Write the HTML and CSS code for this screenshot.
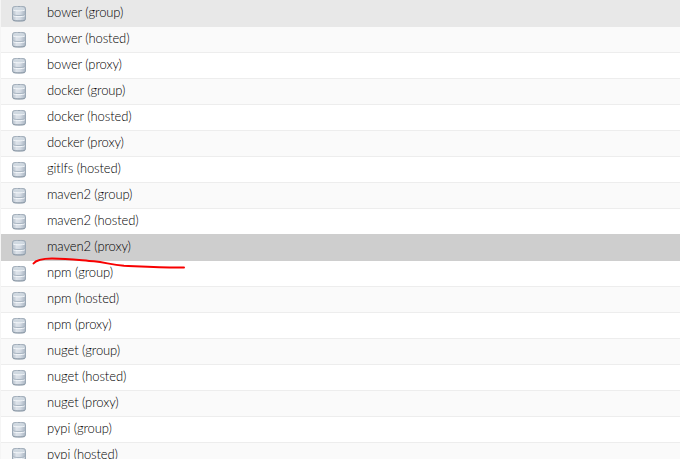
FILE: index.html
```html
<!DOCTYPE html>
<html lang="en">
<head>
  <meta charset="UTF-8" />
  <meta name="viewport" content="width=device-width, initial-scale=1" />
  <title>Recipes</title>
  <link rel="stylesheet" href="styles.css">
</head>
<body>
  <svg class="defs" aria-hidden="true">
    <defs>
      <linearGradient id="metal" x1="0" x2="1" y1="0" y2="0">
        <stop offset="0" stop-color="#b4bec9" />
        <stop offset="0.3" stop-color="#dde3ea" />
        <stop offset="0.6" stop-color="#d3dae3" />
        <stop offset="1" stop-color="#a9b5c2" />
      </linearGradient>
      <symbol id="db" viewBox="0 0 16 17">
        <path d="M1.5 3.5C1.5 1.2 4 1.5 8 1.5S14.5 1.2 14.5 3.5V14C14.5 16.2 12 16 8 16S1.5 16.2 1.5 14Z" fill="url(#metal)" stroke="#9ba8b5" />
        <ellipse cx="8" cy="3.6" rx="5.5" ry="1.5" fill="#d0d9e1" />
        <path d="M2 4.8C3.5 6.2 12.500 6.2 14 4.8M2 10.6C3.5 12 12.5 12 14 10.6" fill="none" stroke="#f5f8fb" />
        <path d="M1.5 9.4C3.5 10.9 12.5 10.9 14.5 9.4" fill="none" stroke="#a5b1bd" stroke-width=".9" />
        <path d="M2 15C4 16.2 12 16.2 14 15" fill="none" stroke="#909daa" />
      </symbol>
    </defs>
  </svg>

  <div class="grid" id="grid"></div>

  <!-- Pen mark under the selected row -->
  <svg class="pen-mark" width="160" height="16" viewBox="0 0 160 16" aria-hidden="true">
    <path d="M3.5 8.5C6 5 13 3.6 22 3.5C39 3.5 52 5.5 64 6.3C76 7.5 81 9.8 94 10.7C112 11.5 132 12.8 154 12.5" />
  </svg>

  <script>
    const recipes = [
      'bower (group)', 'bower (hosted)', 'bower (proxy)',
      'docker (group)', 'docker (hosted)', 'docker (proxy)',
      'gitlfs (hosted)',
      'maven2 (group)', 'maven2 (hosted)', 'maven2 (proxy)',
      'npm (group)', 'npm (hosted)', 'npm (proxy)',
      'nuget (group)', 'nuget (hosted)', 'nuget (proxy)',
      'pypi (group)', 'pypi (hosted)'
    ];

    document.getElementById('grid').innerHTML = recipes.map((name) => {
      let state = '';
      if (name === 'bower (group)') state = ' hover';
      if (name === 'maven2 (proxy)') state = ' selected';
      return `<div class="row${state}"><svg class="icon"><use href="#db" /></svg><span class="name">${name}</span></div>`;
    }).join('');
  </script>
</body>
</html>
```

FILE: styles.css
```css
body {
  margin: 0;
  height: 459px;
  overflow: hidden;
  background: #fff;
  font-family: Lato, "Liberation Sans", sans-serif;
}
.defs {
  position: absolute;
  width: 0;
  height: 0;
}
.grid {
  padding-top: 1px;
  border-left: 1px solid #f5f5f5;
}
.row {
  display: flex;
  align-items: flex-start;
  height: 26px;
  box-sizing: border-box;
  border-bottom: 1px solid #ededed;
  background: #fff;
}
.row:nth-child(even) {
  background: #fafafa;
}
.row.hover {
  background: #e8e8e8;
  border-color: #e8e8e8;
  box-shadow: 0 -1px #e8e8e8;
}
.row.selected {
  background: #cecece;
  border-color: #cecece;
  box-shadow: 0 -1px #cecece;
}
.icon {
  flex: none;
  width: 16px;
  height: 17px;
  margin: 4px 20px 0 10px;
}
.name {
  font-size: 13px;
  font-weight: 300;
  line-height: 15px;
  letter-spacing: -0.1px;
  margin-top: 4px;
  color: #000;
  white-space: nowrap;
}
.pen-mark {
  position: absolute;
  left: 30px;
  top: 255px;
}
.pen-mark path {
  fill: none;
  stroke: #f80000;
  stroke-width: 2;
  stroke-linecap: round;
}
```
